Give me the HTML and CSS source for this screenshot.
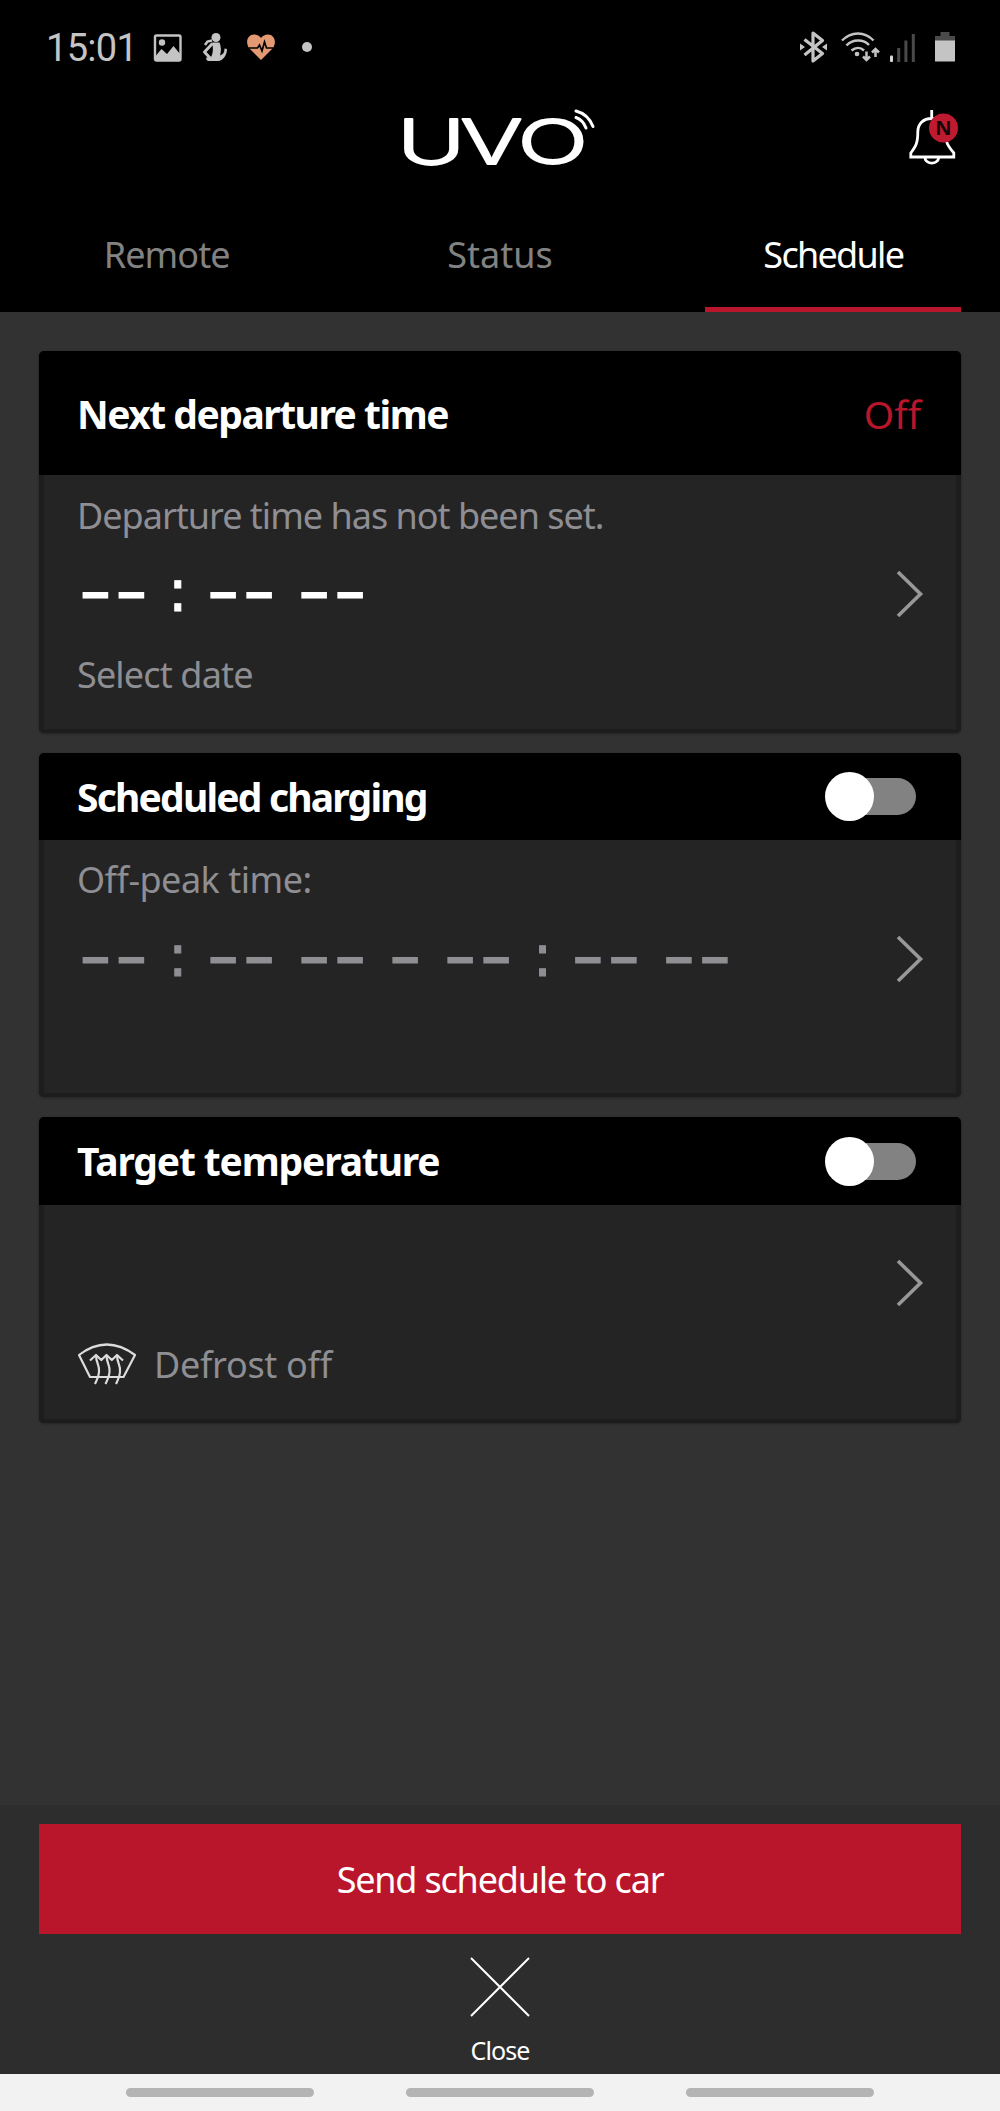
FILE: index.html
```
<!DOCTYPE html>
<html lang="en">
<head>
<meta charset="utf-8">
<title>UVO – Schedule</title>
<link rel="stylesheet" href="styles.css">
</head>
<body>
<div class="screen">
  <div class="status-bar">
    <span class="clock">15:01</span>
    <svg class="icon-image" width="30" height="32" viewBox="0 0 30 32" fill="none">
      <rect x="2" y="4.5" width="25.5" height="25" rx="1.5" stroke="#c4c4c4" stroke-width="2.4"/>
      <circle cx="9" cy="11.5" r="3.2" fill="#c4c4c4"/>
      <path d="M3 24.5 8.5 18l5.500 5L20.500 15l7 8.500V29.500H3Z" fill="#c4c4c4"/>
    </svg>
    <svg class="icon-person" width="26" height="32" viewBox="0 0 26 32" fill="none">
      <circle cx="14" cy="6.500" r="4.500" fill="#c4c4c4"/>
      <path d="M10 9.500 5.500 10.500 3 14" stroke="#c4c4c4" stroke-width="2.500"/>
      <path d="M10.500 12.500 2.500 21 8 27" stroke="#c4c4c4" stroke-width="3" stroke-linejoin="round"/>
      <path d="M10 11.500h7.500c1.500 4 2 8 .5 13 3-1 4.500-3 4.500-7l2.500.5c0 6-4 12-9 12H7c-2 0-3.500-2-2.500-3.500l4.500-.5c2-3 2.500-9 1-14.500Z" fill="#c4c4c4"/>
    </svg>
    <svg class="icon-heart" width="28" height="32" viewBox="0 0 28 32" fill="none">
      <path d="M14 29 2.500 17.500C-2.500 11 1 3.500 7 3.500c3 0 5.500 1.200 7 3.500 1.500-2.300 4-3.500 7-3.500 6 0 9.500 7.500 4.500 14Z" fill="#e39a72"/>
      <path d="M2 17h8.500l2-3 2.500 6 2.500-9 2 6H26" stroke="#000" stroke-width="1.700"/>
    </svg>
    <span class="more-dot"></span>
    <svg class="icon-bluetooth" width="28" height="32" viewBox="0 0 28 32" fill="none">
      <path d="M4.500 8.500 22.500 22.500 13 30V2l9.500 7.500L4.500 24" stroke="#c4c4c4" stroke-width="3.200" stroke-linejoin="round"/>
      <path d="M0 12.500 5 16l-5 3.500ZM27 12.500 22 16l5 3.500Z" fill="#c4c4c4"/>
    </svg>
    <svg class="icon-wifi" width="40" height="32" viewBox="0 0 40 32" fill="none" stroke="#c4c4c4" stroke-width="2.500">
      <path d="M1 9.500C10 0 24 0 32.500 9.500M5.500 14.500c6-6.500 17-6.500 22.500-.5M10.500 19.500c4-3.500 9-3.500 12.500 0"/>
      <circle cx="16" cy="23" r="2.300" fill="#c4c4c4" stroke="none"/>
      <path d="M25.500 20.500v8M22 25.500l3.500 3.500 3.500-3.500M34.500 26v-8M31 21.500l3.500-3.500 3.500 3.500"/>
    </svg>
    <svg class="icon-signal" width="26" height="32" viewBox="0 0 26 32">
      <rect x="0" y="24.500" width="3" height="6.500" rx="1" fill="#d8d8d8"/>
      <path d="M7.200 17h3v14h-3ZM14.400 9.500h3V31h-3ZM21.800 3h3v28h-3Z" fill="#4a4a4a"/>
    </svg>
    <svg class="icon-battery" width="20" height="32" viewBox="0 0 20 32">
      <path d="M5.500 1h9v4H20v5H0V5h5.500Z" fill="#4a4a4a"/>
      <path d="M0 9.500h20V30.500H0Z" fill="#c4c4c4"/>
    </svg>
  </div>

  <header class="app-header">
    <svg class="logo" width="200" height="64" viewBox="0 0 200 64">
      <text class="logo-text" transform="scale(1.5 1)" x="-2 40.200 78.300" y="59">UVO</text>
      <path d="M176 12.500Q183 15 186 23M176 6Q188 9 193 21.500" fill="none" stroke="#fff" stroke-width="3" stroke-linecap="round"/>
    </svg>
    <svg class="bell" width="60" height="64" viewBox="0 0 60 64" fill="none">
      <path d="M26.700 5v8M26.700 13.500C18 13.500 12.800 19 12.800 27 12.800 38 11 41 5.800 48v4h43v-4C43 41 40.500 38 40.500 27c0-8-5-13.500-13.800-13.500ZM19.800 52.500c1 7.500 13 7.500 14 0" stroke="#fff" stroke-width="2.800"/>
      <circle cx="38.500" cy="23" r="14.500" fill="#c01a30"/>
      <text class="bell-badge" x="38.500" y="30" text-anchor="middle">N</text>
    </svg>
  </header>

  <nav class="tabs">
    <a class="tab"><span class="tab-remote">Remote</span></a>
    <a class="tab"><span>Status</span></a>
    <a class="tab tab-active"><span class="tab-schedule">Schedule</span></a>
  </nav>

  <main class="content">
    <section class="card card-departure">
      <div class="card-head"><h2 class="title-next">Next departure time</h2><span class="state">Off</span></div>
      <div class="card-body">
        <p class="note note-departure">Departure time has not been set.</p>
        <div class="row">
          <span class="time time-set">-- <span class="colon">:</span> -- --</span>
          <svg class="chevron" width="26" height="48" viewBox="0 0 26 48"><path d="M1 2 23.500 24 1 46" fill="none" stroke="#989898" stroke-width="3.600"/></svg>
        </div>
        <p class="note note-date">Select date</p>
      </div>
    </section>

    <section class="card card-charging">
      <div class="card-head"><h2 class="title-charging">Scheduled charging</h2><span class="toggle"></span></div>
      <div class="card-body">
        <p class="note note-offpeak">Off-peak time:</p>
        <div class="row">
          <span class="time">-- <span class="colon">:</span> -- -- - -- <span class="colon">:</span> -- --</span>
          <svg class="chevron" width="26" height="48" viewBox="0 0 26 48"><path d="M1 2 23.500 24 1 46" fill="none" stroke="#989898" stroke-width="3.600"/></svg>
        </div>
      </div>
    </section>

    <section class="card card-temperature">
      <div class="card-head"><h2 class="title-target">Target temperature</h2><span class="toggle"></span></div>
      <div class="card-body">
        <div class="row">
          <svg class="chevron" width="26" height="48" viewBox="0 0 26 48"><path d="M1 2 23.500 24 1 46" fill="none" stroke="#989898" stroke-width="3.600"/></svg>
        </div>
        <div class="defrost">
          <svg width="60" height="44" viewBox="0 0 60 44" fill="none" stroke="#dcdcdc" stroke-width="2.200" stroke-linejoin="round">
            <path d="M2 13Q29.500-8 58 13L46.500 35H13Z"/>
            <path d="M19 13c0 9 4 10 3 17-.5 5-2 8-4 12M29.500 13c0 9 4 10 3 17-.5 5-2 8-4 12M40 13c0 9 4 10 3 17-.5 5-2 8-4 12"/>
            <path d="M13 18.500 19 13l5.300 5 5.200-5 5.300 5 5.200-5 6 5.500"/>
          </svg>
          <p class="note note-defrost">Defrost off</p>
        </div>
      </div>
    </section>
  </main>

  <footer class="footer">
    <button class="send"><span>Send schedule to car</span></button>
    <a class="close">
      <svg width="60" height="60" viewBox="0 0 60 60"><path d="M1 1 59 59M59 1 1 59" stroke="#fff" stroke-width="2"/></svg>
      <span>Close</span>
    </a>
  </footer>

  <div class="system-nav"><i></i><i></i><i></i></div>
</div>
</body>
</html>
```
FILE: styles.css
```
* { box-sizing: border-box; }

body {
  margin: 0;
  background: #323232;
  font-family: "Noto Sans", "Open Sans", sans-serif;
  font-size: 36px;
  color: #fff;
}

h2, p { margin: 0; }

svg { display: block; flex: none; overflow: visible; }

.screen {
  display: flex;
  flex-direction: column;
  width: 1000px;
  height: 2111px;
  overflow: hidden;
}

/* System status bar */
.status-bar {
  display: flex;
  align-items: center;
  height: 94px;
  padding: 0 45px 0 46px;
  background: #000;
}

.clock {
  width: 107px;
  padding-top: 2px;
  font: 38px/94px Roboto, sans-serif;
  letter-spacing: -0.7px;
  color: #c4c4c4;
}

.icon-person { margin-left: 19px; }
.icon-heart { margin-left: 19px; }

.more-dot {
  width: 10px;
  height: 10px;
  margin-left: 27px;
  border-radius: 50%;
  background: #c4c4c4;
}

.icon-bluetooth { margin-left: auto; }
.icon-wifi { margin-left: 13px; }
.icon-signal { margin-left: 9px; }
.icon-battery { margin-left: 19px; }

/* Brand row */
.app-header {
  display: grid;
  grid-template-columns: 1fr 200px 1fr;
  height: 101px;
  padding-top: 11px;
  background: #000;
}

.logo { grid-column: 2; }

.logo-text {
  font: 300 62px Inter, sans-serif;
  fill: #fff;
  stroke: #fff;
  stroke-width: 1.8px;
  stroke-linejoin: round;
}

.bell {
  justify-self: end;
  margin-right: 35px;
}

.bell-badge {
  font: 700 20px "Noto Sans", sans-serif;
  fill: #160508;
}

/* Tabs */
.tabs {
  display: grid;
  grid-template-columns: repeat(3, 1fr);
  height: 117px;
  background: #000;
}

.tab {
  position: relative;
  height: 117px;
  text-align: center;
  line-height: 119px;
  color: #828282;
}

.tab-remote { letter-spacing: -0.9px; }

.tab-active { color: #fff; }

.tab-schedule { letter-spacing: -1.7px; }

.tab-active::after {
  content: "";
  position: absolute;
  right: 39px;
  bottom: 0;
  left: 38px;
  height: 5px;
  background: #ba162b;
}

/* Cards */
.content {
  flex: 1;
  display: flex;
  flex-direction: column;
  gap: 20px;
  padding: 39px 39px 0;
}

.card {
  display: flex;
  flex-direction: column;
  overflow: hidden;
  border-radius: 5px;
  background: #242424;
  box-shadow: 0 1px 3px rgba(0, 0, 0, 0.3);
}

.card-departure { height: 382px; }
.card-charging { height: 344px; }
.card-temperature { height: 306px; }

.card-head {
  display: flex;
  align-items: center;
  justify-content: space-between;
  height: 87px;
  padding: 0 39px 0 38px;
  background: #000;
}

.card-departure .card-head { height: 124px; padding-top: 1px; padding-right: 40px; }
.card-temperature .card-head { height: 88px; }

.card-head h2 {
  font-size: 39px;
  font-weight: 700;
  line-height: 60px;
  white-space: nowrap;
}

.title-next { letter-spacing: -1.5px; }
.title-charging { letter-spacing: -1.8px; }
.title-target { letter-spacing: -1.15px; }

.state {
  font-size: 39px;
  line-height: 60px;
  color: #ba162b;
}

.toggle {
  position: relative;
  width: 91px;
  height: 49px;
  margin-right: 6px;
}

.toggle::before {
  content: "";
  position: absolute;
  inset: 6px 0 6px 14px;
  border-radius: 19px;
  background: #828282;
}

.toggle::after {
  content: "";
  position: absolute;
  top: 0;
  left: 0;
  width: 49px;
  height: 49px;
  border-radius: 50%;
  background: #fff;
}

.card-body {
  flex: 1;
  padding: 15px 33px 0;
  border: solid #1d1d1d;
  border-width: 0 5px 4px;
}

.card-departure .card-body { padding-top: 16px; }
.card-temperature .card-body { padding-top: 45px; }

.note {
  line-height: 50px;
  white-space: nowrap;
  color: #8e8e93;
}

.note-departure { letter-spacing: -1px; }
.note-date { margin-top: 29px; letter-spacing: -0.85px; }
.note-offpeak { letter-spacing: -0.5px; }
.note-defrost { padding-top: 2px; letter-spacing: -0.3px; }

.row {
  display: flex;
  align-items: center;
  justify-content: flex-end;
  height: 60px;
  margin-top: 21px;
}

.card-departure .row { margin-top: 20px; }
.card-temperature .row { margin-top: 0; }

.time {
  margin-right: auto;
  font: 400 80px/60px Inter, sans-serif;
  font-feature-settings: "calt" 0;
  letter-spacing: -0.8px;
  word-spacing: -2.7px;
  white-space: nowrap;
  color: #8e8e93;
}

.time-set { color: #fff; }

.colon {
  margin-right: -1px;
  font: 58px/0 "DejaVu Sans", sans-serif;
  vertical-align: 9px;
  -webkit-text-stroke: 1px currentColor;
}

.chevron { margin-top: 5px; }

.defrost {
  display: flex;
  align-items: center;
  gap: 17px;
  margin-top: 28px;
}

/* Footer */
.footer {
  display: flex;
  flex-direction: column;
  align-items: center;
  height: 269px;
  padding: 19px 39px 0;
  background: #2d2d2d;
}

.send {
  align-self: stretch;
  height: 110px;
  padding: 0;
  border: 0;
  background: #ba162b;
  color: #fff;
  font: inherit;
  letter-spacing: -1.2px;
}

.close {
  display: flex;
  flex-direction: column;
  align-items: center;
  gap: 16px;
  margin-top: 23px;
  font-size: 25px;
  line-height: 34px;
  letter-spacing: -0.9px;
}

/* System navigation */
.system-nav {
  display: flex;
  align-items: center;
  justify-content: center;
  gap: 92px;
  height: 37px;
  background: #f2f2f2;
}

.system-nav i {
  width: 188px;
  height: 9px;
  border-radius: 5px;
  background: #b4b4b4;
}
```
